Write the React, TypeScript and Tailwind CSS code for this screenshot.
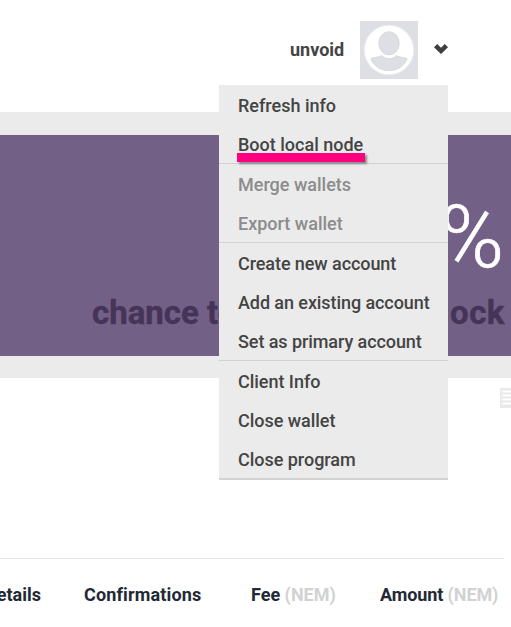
import React from 'react';

const menuGroups = [
  {
    id: 'node',
    style: 'text-[#444]',
    items: ['Refresh info', 'Boot local node'],
  },
  {
    id: 'wallets',
    style: 'text-[#8c8c8c]',
    items: ['Merge wallets', 'Export wallet'],
  },
  {
    id: 'accounts',
    style: 'text-[#444] tracking-[-0.08px]',
    items: ['Create new account', 'Add an existing account', 'Set as primary account'],
  },
  {
    id: 'client',
    style: 'text-[#444] tracking-[-0.03px]',
    items: ['Client Info', 'Close wallet', 'Close program'],
  },
];

const Avatar: React.FC = () => (
  <svg className="w-[58px] h-[58px] shrink-0" viewBox="0 0 58 58">
    <rect width="58" height="58" fill="#dddfe4" />
    <circle cx="29" cy="29" r="24.8" fill="#fff" stroke="#ebecef" strokeWidth="1" />
    <path
      d="M11 38.2C11 36.3 14 36.8 17 36.2C19 35.8 20.5 35.2 22 34.4C24 36.4 26.5 37.4 29 37.4C31.5 37.4 34 36.4 36 34.4C37.5 35.2 39 35.8 41 36.2C44 36.8 47 36.3 47 38.2C44 45.5 37 49.6 29 49.6C21 49.6 14 45.5 11 38.2Z"
      fill="#dddfe4"
      stroke="#d3d5da"
      strokeWidth="0.8"
    />
    <ellipse cx="29" cy="22.3" rx="12.8" ry="14.6" fill="#fff" />
    <ellipse cx="29" cy="22.3" rx="10.3" ry="11.6" fill="#dddfe4" stroke="#d3d5da" strokeWidth="0.8" />
  </svg>
);

const AccountMenu: React.FC = () => (
  <ul className="absolute left-[219px] top-[85px] w-[229px] bg-[#ebebeb] border-b-2 border-[#d2d2d2] text-lg font-medium">
    {menuGroups.map((group) => (
      <li key={group.id} className="border-b border-[#d2d2d2] last:border-b-0">
        <ul className={group.style}>
          {group.items.map((item) => (
            <li key={item} className="relative flex items-center h-[39px] pl-[19px] pt-[3px] whitespace-nowrap">
              {item}
              {item === 'Boot local node' && (
                <span className="absolute left-[18px] top-[29px] w-32 h-[9px] bg-[#ff007f] shadow-[2px_2px_2px_rgba(0,0,0,0.4)]"></span>
              )}
            </li>
          ))}
        </ul>
      </li>
    ))}
  </ul>
);

const App: React.FC = () => {
  return (
    <div className="relative w-[511px] h-[627px] overflow-hidden bg-white font-['Roboto',sans-serif]">
      <header className="flex items-start h-28 pt-[21px] pl-[290px]">
        <span className="w-[70px] pt-[15px] text-lg font-bold text-[#444]">unvoid</span>
        <Avatar />
        <svg className="w-[14px] h-[10px] ml-4 mt-[23px]" viewBox="0 0 14 10">
          <path d="M0 3.2L3.2 0L7 3.8L10.800 0L14 3.200L7 10Z" fill="#3f3f3f" />
        </svg>
      </header>

      {/* Harvesting chance */}
      <section className="h-[266px] pt-[23px] pb-[22px] bg-[#ebebeb]">
        <div className="flex flex-col h-[221px] pt-[47px] bg-[#736086]">
          <p className="pr-[7px] text-right text-[87px] leading-[110px] font-light text-white [-webkit-text-stroke:0.7px_white]">
            %
          </p>
          <p className="flex justify-between pt-px pl-[92px] pr-[6px] text-[33px] leading-10 font-bold text-[#463458] [-webkit-text-stroke:0.4px_#463458]">
            <span>chance to</span>
            <span className="tracking-[0.5px]">block</span>
          </p>
        </div>
      </section>

      <div className="flex justify-end h-[180px] pt-[10px]">
        <svg className="w-[11px] h-5" viewBox="0 0 11 20">
          <rect width="11" height="20" fill="#e9e9e9" />
          <path d="M3 3.5H11M3 7.5H11M3 11.5H11M3 15.5H11" stroke="#fff" strokeWidth="2" />
          <path d="M2 2.5V17.5" stroke="#fff" strokeWidth="1" strokeDasharray="2 2" />
        </svg>
      </div>

      <div className="flex w-[504px] h-[69px] pt-[22px] border-t border-[#e6e6e6] text-lg font-bold text-[#222834] whitespace-nowrap">
        <span className="flex justify-end w-[41px] mr-[43px]">Details</span>
        <span className="w-[167px] tracking-[0.15px]">Confirmations</span>
        <span className="w-[129px]">
          Fee <span className="text-[#d2d2d2]">(NEM)</span>
        </span>
        <span className="tracking-[-0.1px]">
          Amount <span className="text-[#d2d2d2]">(NEM)</span>
        </span>
      </div>

      <AccountMenu />
    </div>
  );
};

export default App;
